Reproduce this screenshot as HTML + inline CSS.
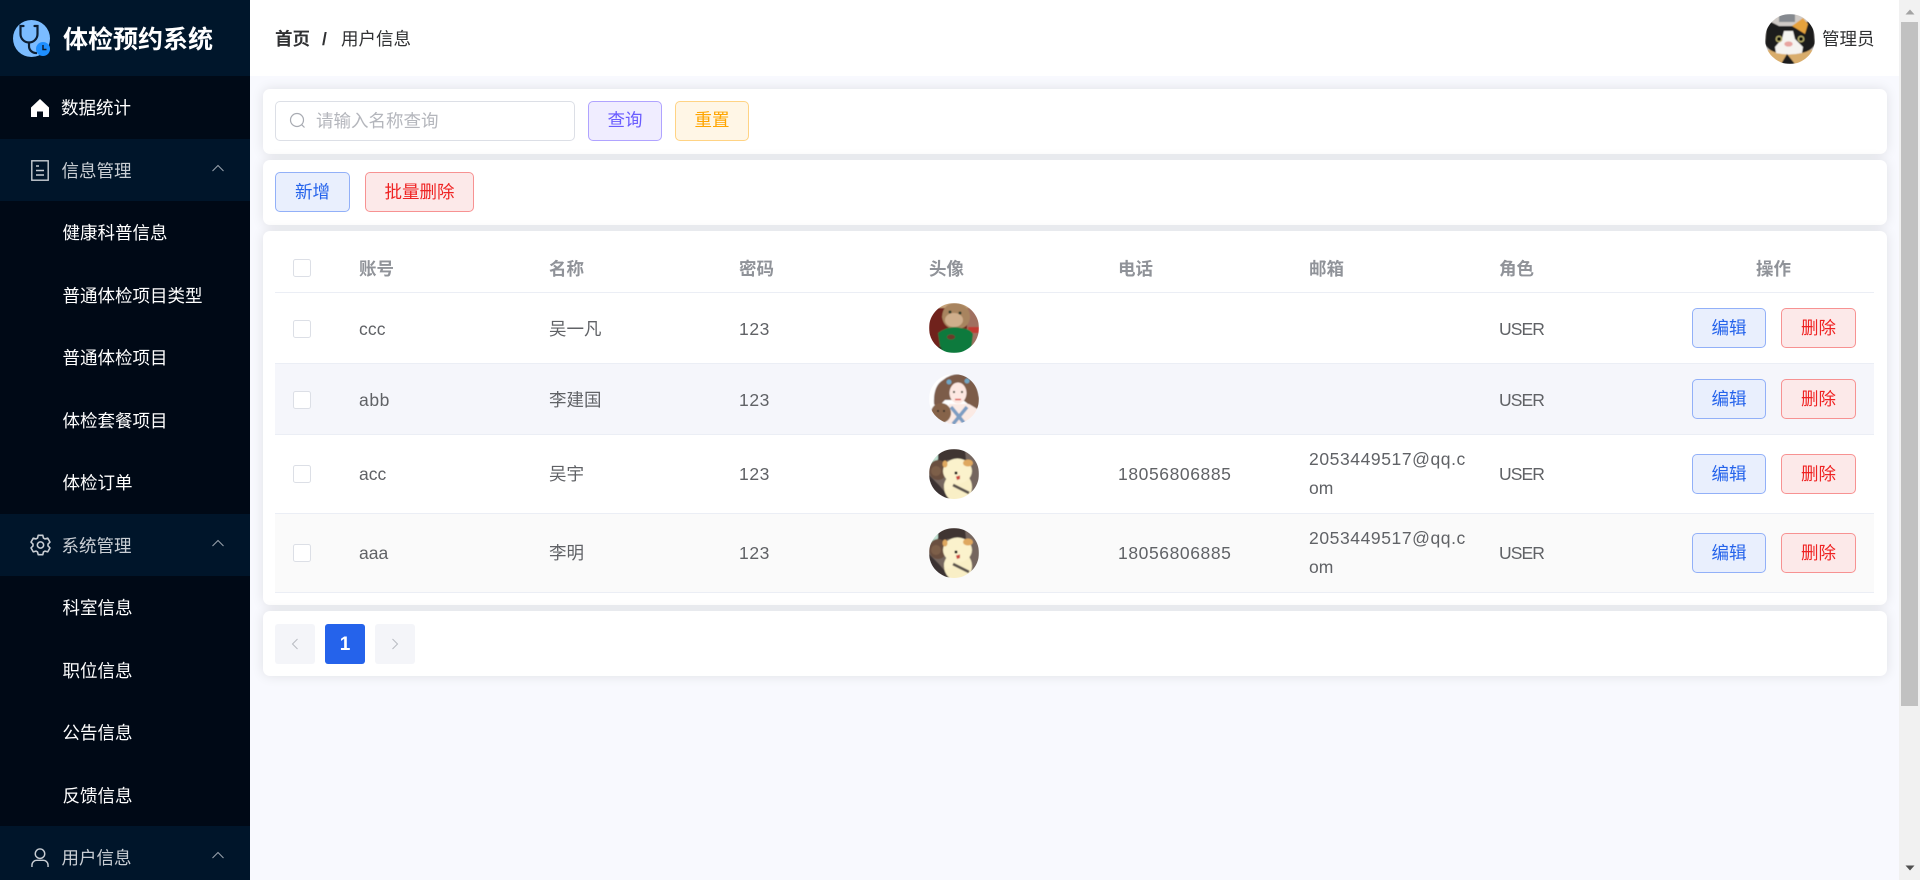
<!DOCTYPE html>
<html lang="zh-CN"><head><meta charset="utf-8"><title>体检预约系统</title>
<style>
*{box-sizing:border-box;margin:0;padding:0}
html,body{width:1920px;height:880px;overflow:hidden;background:#f8f9fe;font-family:"Liberation Sans","Noto Sans CJK SC",sans-serif;font-size:17.5px;color:#606266}
.a{position:absolute}
.t{position:absolute;white-space:nowrap}
#side{position:absolute;left:0;top:0;width:250px;height:880px;background:#000916;overflow:hidden}
.logo{position:absolute;left:0;top:0;width:250px;height:76px;background:#00162b}
.logo b{position:absolute;left:63px;top:2px;line-height:76px;font-size:25px;color:#fff;white-space:nowrap}
.m{position:absolute;left:0;width:250px;height:62.5px;line-height:64.5px;color:#fff;white-space:nowrap}
.m span{position:absolute;left:62.5px;top:0}
.g{background:#00152a;color:#c9ced4}
.g span{left:61.5px}
.m svg{position:absolute}
.chev{left:212px;top:25px}
#hd{position:absolute;left:250px;top:0;width:1649px;height:76px;background:#fff}
.card{position:absolute;left:263px;width:1624px;background:#fff;border-radius:7px;box-shadow:0 0 12px rgba(0,0,0,.1)}
.btn{position:absolute;height:40px;line-height:39px;text-align:center;border:1px solid;border-radius:5px;font-size:17.5px;white-space:nowrap}
.blue{background:#e9effd;border-color:#92b0f8;color:#2563eb}
.red{background:#fce9e9;border-color:#f79292;color:#ef2222}
.cb{position:absolute;left:293px;width:17.5px;height:17.5px;background:#fff;border:1px solid #dcdfe6;border-radius:2.5px}
.th{position:absolute;top:251px;line-height:36px;font-weight:700;color:#909399;white-space:nowrap}
.row{position:absolute;left:275px;width:1599px;border-bottom:1px solid #ebeef5}
.td{position:absolute;white-space:nowrap;line-height:30px;color:#606266}
.av{position:absolute;left:929px;width:50px;height:50px;border-radius:50%;display:block}
.d{letter-spacing:.58px}
.u{letter-spacing:-.9px}
.l{letter-spacing:.1px}
.pg{position:absolute;top:624px;width:40px;height:40px;border-radius:3px;background:#f4f5f9}
</style></head><body>
<svg width="0" height="0" style="position:absolute">
<defs>
<filter id="bl"><feGaussianBlur stdDeviation=".45"/></filter>
<symbol id="bear" viewBox="0 0 50 50">
<g filter="url(#bl)"><rect width="50" height="50" fill="#75665f"/>
<path d="M0 0H14L7 14 0 22z" fill="#bfe0d0"/>
<path d="M9 0H36L37 11H18L17 18H9z" fill="#3f3633"/>
<path d="M0 26L10 36 22 50H0z" fill="#3a3330"/>
<ellipse cx="9" cy="21" rx="9" ry="10" fill="#6b5040"/>
<ellipse cx="7" cy="22" rx="5" ry="5" fill="#7d5f4a"/>
<ellipse cx="29" cy="38" rx="14" ry="15" fill="#f9efc6"/>
<ellipse cx="28.500" cy="22" rx="14.500" ry="12.500" fill="#fbf2cc"/>
<ellipse cx="39" cy="14" rx="5" ry="3.500" fill="#dfa85e"/>
<ellipse cx="16" cy="15" rx="2.500" ry="3.500" fill="#dfa85e"/>
<ellipse cx="20" cy="36" rx="5" ry="5" fill="#fbf2cc"/>
<circle cx="27" cy="24" r="1.500" fill="#111"/><path d="M27 27.500l4-1 0 3.500-3 1z" fill="#c9443c"/>
<path d="M24 36L40 44" stroke="#5c524c" stroke-width="2.800"/></g>
</symbol>
<symbol id="ham" viewBox="0 0 50 50">
<g filter="url(#bl)"><rect width="50" height="50" fill="#6f241c"/>
<rect x="38" y="0" width="12" height="50" fill="#a07060"/>
<rect x="39" y="24" width="11" height="6" fill="#c13a30"/>
<rect x="8" y="0" width="34" height="5" fill="#c6a37a"/>
<path d="M13 14Q14 0 27 0 41 2 41 14 40 26 27 26 15 26 13 14z" fill="#a8845f"/>
<ellipse cx="25" cy="17" rx="9" ry="7" fill="#cfae8c"/>
<circle cx="21" cy="9" r="1.500" fill="#2a3a2a"/><circle cx="31" cy="10" r="1.500" fill="#2a3a2a"/>
<path d="M9 30Q20 22 32 25 42 26 44 31L42 50H12z" fill="#0f7a3c"/>
<path d="M0 44H12L14 50H0z" fill="#2a2a1c"/>
<ellipse cx="22" cy="34" rx="4" ry="2.500" fill="#6b3a2a"/></g>
</symbol>
<symbol id="girl" viewBox="0 0 50 50">
<g filter="url(#bl)"><rect width="50" height="50" fill="#fff"/>
<path d="M5 30Q4 12 14 6 24 -2 36 1 48 6 50 24V36L44 34 34 26H16L8 34z" fill="#7c5b49"/>
<path d="M20 30H40L50 36V50H18z" fill="#fbeae4"/>
<ellipse cx="29" cy="19" rx="8.500" ry="10.500" fill="#fde8e2"/>
<path d="M26 25.500h6" stroke="#d9514a" stroke-width="1.400"/>
<circle cx="25" cy="18" r="1.100" fill="#443"/><circle cx="33" cy="18" r="1.100" fill="#443"/>
<path d="M22 33L36 50M38 33L24 50" stroke="#7d9dc2" stroke-width="3.500"/>
<circle cx="20" cy="8" r="2.500" fill="#6fa6c4"/><circle cx="38" cy="7" r="2.500" fill="#6fa6c4"/>
<ellipse cx="12" cy="39" rx="10" ry="10" fill="#866349"/>
<circle cx="9" cy="37" r="1" fill="#222"/><circle cx="15" cy="37" r="1" fill="#222"/></g>
</symbol>
<symbol id="cat" viewBox="0 0 50 50">
<g filter="url(#bl)"><rect width="50" height="50" fill="#cfcac6"/>
<rect x="14" y="0" width="16" height="8" fill="#85898f"/>
<rect y="36" width="50" height="14" fill="#d9ad6c"/>
<path d="M2 6L14 12H34L48 5 50 30Q46 40 25 40 4 40 0 30z" fill="#1c1a1a"/>
<path d="M27 12L38 4 43 10 40 20 32 15z" fill="#e5a23e"/>
<path d="M19 17H28L30 25 38 33 37 39Q24 42 11 39L10 33 17 25z" fill="#f5f3ef"/>
<circle cx="14" cy="25" r="3.400" fill="#b9b06a"/><circle cx="14" cy="25" r="2" fill="#111"/>
<circle cx="36" cy="25" r="3.400" fill="#b9b06a"/><circle cx="36" cy="25" r="2" fill="#111"/>
<ellipse cx="23.500" cy="30" rx="4.200" ry="2.600" fill="#e8a5a0"/>
<path d="M16 50L22 40 30 50z" fill="#1c1a1a"/></g>
</symbol>
</defs></svg>

<div id="side">
<div class="logo">
<svg class="a" style="left:13px;top:20px" width="38" height="38" viewBox="0 0 38 38">
<circle cx="18.500" cy="18.500" r="18.500" fill="#7bbcff"/>
<path d="M10.500 6H7.500V14a8.500 8.500 0 0 0 17 0V6H21.500" fill="none" stroke="#0d1f33" stroke-width="2.200" stroke-linecap="round"/>
<path d="M16 22.500V26a7 7 0 0 0 8 7" fill="none" stroke="#0d1f33" stroke-width="2.200"/>
<circle cx="30" cy="29" r="7" fill="#1e8fff"/>
<path d="M30 25v4.500h3.500" fill="none" stroke="#0d1f33" stroke-width="1.500"/>
</svg>
<b>体检预约系统</b></div>

<div class="m" style="top:76px;background:#000a17"><svg style="left:31px;top:23px" width="18" height="18" viewBox="0 0 18 18"><path d="M9 0L18 8.500V18H12V12.500H6V18H0V8.500z" fill="#fff"/></svg><span style="left:61px">数据统计</span></div>

<div class="m g" style="top:138.500px"><svg style="left:31px;top:21px" width="18" height="21" viewBox="0 0 18 21" fill="none" stroke="#c9ced4" stroke-width="1.400"><rect x=".8" y=".8" width="16.400" height="19.400"/><path d="M5 6h3M5 10.500h8M5 15h8"/></svg><span>信息管理</span><svg class="chev" width="12" height="8" viewBox="0 0 12 8" fill="none" stroke="#9aa3ad" stroke-width="1"><path d="M.5 7L6 1.500 11.500 7"/></svg></div>
<div class="m" style="top:201px"><span>健康科普信息</span></div>
<div class="m" style="top:263.500px"><span>普通体检项目类型</span></div>
<div class="m" style="top:326px"><span>普通体检项目</span></div>
<div class="m" style="top:388.500px"><span>体检套餐项目</span></div>
<div class="m" style="top:451px"><span>体检订单</span></div>

<div class="m g" style="top:513.500px"><svg style="left:29px;top:20px" width="23" height="23" viewBox="0 0 1024 1024" fill="none" stroke="#c9ced4" stroke-width="70" stroke-linejoin="round"><path d="M410 60h204l30 120 70 40 120-34 100 176-88 88v80l88 88-100 176-120-34-70 40-30 120H410l-30-120-70-40-120 34L90 618l88-88v-80l-88-88 100-176 120 34 70-40z"/><circle cx="512" cy="490" r="140"/></svg><span>系统管理</span><svg class="chev" width="12" height="8" viewBox="0 0 12 8" fill="none" stroke="#9aa3ad" stroke-width="1"><path d="M.5 7L6 1.500 11.500 7"/></svg></div>
<div class="m" style="top:576px"><span>科室信息</span></div>
<div class="m" style="top:638.500px"><span>职位信息</span></div>
<div class="m" style="top:701px"><span>公告信息</span></div>
<div class="m" style="top:763.500px"><span>反馈信息</span></div>

<div class="m g" style="top:826px"><svg style="left:31px;top:22px" width="18" height="19" viewBox="0 0 19 20" fill="none" stroke="#c9ced4" stroke-width="1.500"><circle cx="9.500" cy="6" r="5"/><path d="M1 20v-2a5 5 0 0 1 5-5h7a5 5 0 0 1 5 5v2"/></svg><span>用户信息</span><svg class="chev" width="12" height="8" viewBox="0 0 12 8" fill="none" stroke="#9aa3ad" stroke-width="1"><path d="M.5 7L6 1.500 11.500 7"/></svg></div>
</div>

<div id="hd"></div>
<div class="t" style="left:275px;top:24px;line-height:30px;font-weight:700;color:#303133">首页</div>
<div class="t" style="left:322px;top:24px;line-height:30px;font-weight:700;color:#303133">/</div>
<div class="t" style="left:341px;top:24px;line-height:30px;color:#303133">用户信息</div>
<svg class="a" style="left:1765px;top:14px;border-radius:50%" width="50" height="50"><use href="#cat"/></svg>
<div class="t" style="left:1822px;top:24px;line-height:30px;color:#303133">管理员</div>

<div class="card" style="top:89px;height:65px"></div>
<div class="card" style="top:160px;height:65px"></div>
<div class="card" style="top:231px;height:374px"></div>
<div class="card" style="top:611px;height:65px"></div>

<div class="a" style="left:275px;top:101px;width:300px;height:40px;background:#fff;border:1px solid #dcdfe6;border-radius:5px"></div>
<svg class="a" style="left:289px;top:112px" width="17" height="17" viewBox="0 0 17 17" fill="none" stroke="#a8abb2" stroke-width="1.200"><circle cx="8" cy="8" r="6.500"/><path d="M12.800 12.800L15.500 15.500"/></svg>
<div class="t" style="left:316px;top:106px;line-height:30px;color:#b4b6bc">请输入名称查询</div>
<div class="btn" style="left:588px;top:101px;width:74px;line-height:37px;background:#f0edff;border-color:#b0a3ff;color:#6a5cff">查询</div>
<div class="btn" style="left:675px;top:101px;width:74px;line-height:37px;background:#fff6e6;border-color:#ffd384;color:#ffa500">重置</div>
<div class="btn blue" style="left:275px;top:172px;width:75px">新增</div>
<div class="btn red" style="left:365px;top:172px;width:109px">批量删除</div>

<div class="row" style="top:292px;height:1px;background:#ebeef5;border:0"></div>
<div class="cb" style="top:259px"></div>
<div class="th" style="left:359px">账号</div><div class="th" style="left:549px">名称</div><div class="th" style="left:739px">密码</div><div class="th" style="left:929px">头像</div><div class="th" style="left:1118px">电话</div><div class="th" style="left:1309px">邮箱</div><div class="th" style="left:1499px">角色</div><div class="th" style="left:1756px">操作</div>

<div class="row" style="top:293px;height:71px;background:#fff"></div>
<div class="row" style="top:364px;height:71px;background:#f5f6fb"></div>
<div class="row" style="top:435px;height:79px;background:#fff"></div>
<div class="row" style="top:514px;height:79px;background:#fafafa"></div>

<div class="cb" style="top:320px"></div>
<div class="td l" style="left:359px;top:314px">ccc</div><div class="td" style="left:549px;top:314px">吴一凡</div><div class="td d" style="left:739px;top:314px">123</div>
<svg class="av" style="top:303px"><use href="#ham"/></svg>
<div class="td u" style="left:1499px;top:314px">USER</div>
<div class="btn blue" style="left:1692px;top:308px;width:74px">编辑</div><div class="btn red" style="left:1781px;top:308px;width:75px">删除</div>

<div class="cb" style="top:391px"></div>
<div class="td l" style="left:359px;top:385px;letter-spacing:.6px">abb</div><div class="td" style="left:549px;top:385px">李建国</div><div class="td d" style="left:739px;top:385px">123</div>
<svg class="av" style="top:374px"><use href="#girl"/></svg>
<div class="td u" style="left:1499px;top:385px">USER</div>
<div class="btn blue" style="left:1692px;top:379px;width:74px">编辑</div><div class="btn red" style="left:1781px;top:379px;width:75px">删除</div>

<div class="cb" style="top:465px"></div>
<div class="td" style="left:359px;top:459px">acc</div><div class="td" style="left:549px;top:459px">吴宇</div><div class="td d" style="left:739px;top:459px">123</div>
<svg class="av" style="top:449px"><use href="#bear"/></svg>
<div class="td d" style="left:1118px;top:459px">18056806885</div>
<div class="td d" style="left:1309px;top:444px">2053449517@qq.c</div><div class="td" style="left:1309px;top:473px">om</div>
<div class="td u" style="left:1499px;top:459px">USER</div>
<div class="btn blue" style="left:1692px;top:454px;width:74px">编辑</div><div class="btn red" style="left:1781px;top:454px;width:75px">删除</div>

<div class="cb" style="top:544px"></div>
<div class="td" style="left:359px;top:538px">aaa</div><div class="td" style="left:549px;top:538px">李明</div><div class="td d" style="left:739px;top:538px">123</div>
<svg class="av" style="top:528px"><use href="#bear"/></svg>
<div class="td d" style="left:1118px;top:538px">18056806885</div>
<div class="td d" style="left:1309px;top:523px">2053449517@qq.c</div><div class="td" style="left:1309px;top:552px">om</div>
<div class="td u" style="left:1499px;top:538px">USER</div>
<div class="btn blue" style="left:1692px;top:533px;width:74px">编辑</div><div class="btn red" style="left:1781px;top:533px;width:75px">删除</div>

<div class="pg" style="left:275px"><svg class="a" style="left:16px;top:14px" width="8" height="12" viewBox="0 0 8 12" fill="none" stroke="#b8bbc2" stroke-width="1"><path d="M6.500 1L1.500 6l5 5"/></svg></div>
<div class="pg" style="left:325px;background:#2563eb;color:#fff;font-weight:700;text-align:center;line-height:42px;font-size:19px">1</div>
<div class="pg" style="left:375px"><svg class="a" style="left:16px;top:14px" width="8" height="12" viewBox="0 0 8 12" fill="none" stroke="#b8bbc2" stroke-width="1"><path d="M1.500 1l5 5-5 5"/></svg></div>

<div class="a" style="left:1899px;top:0;width:21px;height:880px;background:#f1f1f1"></div>
<div class="a" style="left:1901px;top:22px;width:17px;height:684px;background:#c1c1c1"></div>
<svg class="a" style="left:1904px;top:8px" width="12" height="8"><path d="M6 1.500L10.500 6.500H1.500z" fill="#a3a3a3"/></svg>
<svg class="a" style="left:1904px;top:864px" width="12" height="8"><path d="M1.500 1.500H10.500L6 6.500z" fill="#505050"/></svg>
</body></html>
